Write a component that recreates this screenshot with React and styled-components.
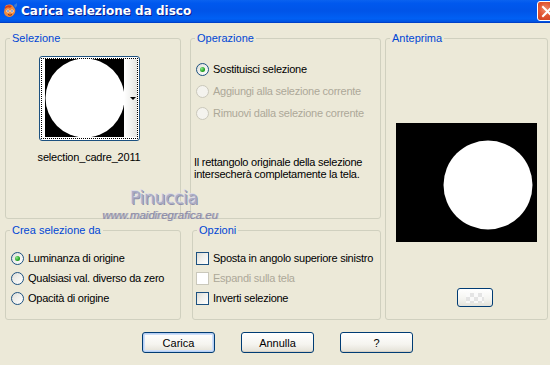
import React from 'react'
import styled, { createGlobalStyle } from 'styled-components'

const GlobalStyle = createGlobalStyle`
  html, body {
    margin: 0;
    padding: 0;
    background: #ece9d8;
  }
`

const App = () => {
  return (
    <Window>
      <GlobalStyle />
      <TitleBar>
        <AppIcon />
        <TitleText>Carica selezione da disco</TitleText>
        <CloseButton>
          <svg width="13" height="13" viewBox="0 0 13 13">
            <path d="M2 2 L11 11 M11 2 L2 11" stroke="#fff" strokeWidth="2" strokeLinecap="square" />
          </svg>
        </CloseButton>
      </TitleBar>

      <Body>
        <Groups>
          <Group>
            <Legend>Selezione</Legend>
            <SelectionContent>
              <Thumb>
                <Focus>
                  <svg width="79" height="78" viewBox="0 0 79 78">
                    <rect width="79" height="78" fill="#000" />
                    <circle cx="40" cy="39" r="39.5" fill="#fff" />
                  </svg>
                  <Strip>
                    <Arrow />
                  </Strip>
                </Focus>
              </Thumb>
              <ThumbName>selection_cadre_2011</ThumbName>
            </SelectionContent>
          </Group>

          <Group $shift={5}>
            <Legend>Operazione</Legend>
            <OptionList $top={13} $row={22}>
              <Option>
                <Radio $checked />
                <OptionLabel>Sostituisci selezione</OptionLabel>
              </Option>
              <Option>
                <Radio $disabled />
                <OptionLabel $disabled>Aggiungi alla selezione corrente</OptionLabel>
              </Option>
              <Option>
                <Radio $disabled />
                <OptionLabel $disabled>Rimuovi dalla selezione corrente</OptionLabel>
              </Option>
            </OptionList>
            <Note>
              Il rettangolo originale della selezione
              <br />
              intersecherà completamente la tela.
            </Note>
          </Group>

          <PreviewGroup>
            <Legend>Anteprima</Legend>
            <Preview>
              <svg width="141" height="119" viewBox="0 0 141 119">
                <rect width="141" height="119" fill="#000" />
                <circle cx="92" cy="62" r="44.5" fill="#fff" />
              </svg>
            </Preview>
            <SmallButton>
              <Checker />
            </SmallButton>
          </PreviewGroup>

          <Group>
            <Legend>Crea selezione da</Legend>
            <OptionList $top={11} $row={20} $left={5}>
              <Option>
                <Radio $checked />
                <OptionLabel>Luminanza di origine</OptionLabel>
              </Option>
              <Option>
                <Radio />
                <OptionLabel>Qualsiasi val. diverso da zero</OptionLabel>
              </Option>
              <Option>
                <Radio />
                <OptionLabel>Opacità di origine</OptionLabel>
              </Option>
            </OptionList>
          </Group>

          <Group $shift={7}>
            <Legend>Opzioni</Legend>
            <OptionList $top={11} $row={20} $left={3}>
              <Option>
                <Check />
                <OptionLabel>Sposta in angolo superiore sinistro</OptionLabel>
              </Option>
              <Option>
                <Check $disabled />
                <OptionLabel $disabled>Espandi sulla tela</OptionLabel>
              </Option>
              <Option>
                <Check />
                <OptionLabel>Inverti selezione</OptionLabel>
              </Option>
            </OptionList>
          </Group>
        </Groups>

        <ButtonRow>
          <PushButton $default>Carica</PushButton>
          <PushButton>Annulla</PushButton>
          <PushButton>?</PushButton>
        </ButtonRow>
      </Body>

      <Watermark>
        <WatermarkName>Pinuccia</WatermarkName>
        <WatermarkUrl>www.maidiregrafica.eu</WatermarkUrl>
      </Watermark>
    </Window>
  )
}

const AppIcon = () => (
  <IconBox>
    <svg width="16" height="16" viewBox="0 0 16 16">
      <path d="M3 4 C4 1 9 1 11 3 L13 6 C14 9 12 13 8 14 C5 14 2 12 2 9 Z" fill="#f08a3c" />
      <path d="M3 4 C5 2 8 2 10 3 L8 5 C6 4 4 5 3 6 Z" fill="#d23a1e" />
      <circle cx="6" cy="8" r="1.6" fill="#fff" />
      <circle cx="10" cy="8" r="1.6" fill="#fff" />
      <circle cx="6" cy="8" r="0.8" fill="#1a3a8a" />
      <circle cx="10" cy="8" r="0.8" fill="#1a3a8a" />
      <path d="M12 2 L15 0 L15 3 L13 5 Z" fill="#3a7bd5" />
      <path d="M6 11.5 Q8 13 10 11.5" stroke="#8a2a10" strokeWidth="1" fill="none" />
    </svg>
  </IconBox>
)

export default App

/* window + title */
const Window = styled.div`
  position: relative;
  width: 550px;
  height: 365px;
  overflow: hidden;
  background: #ece9d8;
  font-family: 'Liberation Sans', Arial, sans-serif;
  font-size: 11px;
  color: #000;
`
const TitleBar = styled.div`
  display: flex;
  align-items: center;
  height: 23px;
  box-sizing: border-box;
  border-bottom: 1px solid #0040c8;
  background: linear-gradient(
    to bottom,
    #0a62f0 0%,
    #0058ee 15%,
    #0054e8 50%,
    #0060f4 85%,
    #0051df 100%
  );
`
const IconBox = styled.span`
  display: flex;
  width: 16px;
  height: 16px;
  margin: 0 3px 0 2px;
`
const TitleText = styled.span`
  flex: 1;
  font-family: 'DejaVu Sans', 'Liberation Sans', sans-serif;
  font-weight: bold;
  font-size: 12px;
  color: #fff;
  text-shadow: 1px 1px 0 #0a1e8c;
`
const CloseButton = styled.span`
  display: flex;
  align-items: center;
  justify-content: center;
  align-self: flex-start;
  flex-shrink: 0;
  width: 21px;
  height: 20px;
  margin: 1px -8px 0 0;
  box-sizing: border-box;
  border: 1px solid #fff;
  border-radius: 3px;
  background: radial-gradient(circle at 40% 40%, #f08a6a 0%, #e0532f 45%, #c3391a 100%);
`

/* body layout */
const Body = styled.div`
  padding: 9px 2px 0 5px;
`
const Groups = styled.div`
  display: grid;
  grid-template-columns: 176px 196px 163px;
  grid-template-rows: 187px 96px;
  column-gap: 4px;
  row-gap: 5px;
`
const Group = styled.fieldset`
  margin: 0 0 0 ${(p) => p.$shift || 0}px;
  padding: 0;
  min-width: 0;
  border: 1px solid #d0d0bf;
  border-radius: 3px;
`
const PreviewGroup = styled(Group)`
  grid-column: 3;
  grid-row: 1 / span 2;
  display: flex;
  flex-direction: column;
  align-items: center;
`
const Legend = styled.legend`
  margin-left: 4px;
  padding: 0 2px;
  line-height: 13px;
  color: #0046d5;
`

/* selezione */
const SelectionContent = styled.div`
  display: flex;
  flex-direction: column;
  align-items: center;
  width: 102px;
  padding: 11px 0 0 32px;
`
const Thumb = styled.div`
  width: 101px;
  height: 85px;
  box-sizing: border-box;
  padding: 1px;
  border: 1px solid #1c5180;
  border-radius: 3px;
  background: #fff;
`
const Focus = styled.div`
  display: flex;
  height: 100%;
  box-sizing: border-box;
  padding: 0 0 0 3px;
  border: 1px dotted #000;
  align-items: flex-start;
`
const Strip = styled.div`
  flex: 1;
  height: 78px;
  display: flex;
  align-items: center;
  justify-content: flex-end;
  padding-right: 1px;
  background: linear-gradient(to right, #ffffff 0%, #f2f2f0 50%, #e4e4e0 100%);
`
const Arrow = styled.span`
  width: 0;
  height: 0;
  border-left: 3px solid transparent;
  border-right: 3px solid transparent;
  border-top: 3px solid #000;
`
const ThumbName = styled.div`
  margin-top: 10px;
  line-height: 13px;
  letter-spacing: -0.2px;
  white-space: nowrap;
`

/* radio / check lists */
const OptionList = styled.div`
  display: flex;
  flex-direction: column;
  padding: ${(p) => p.$top}px 0 0 ${(p) => p.$left || 5}px;
  & > * {
    height: ${(p) => p.$row}px;
  }
`
const Option = styled.div`
  display: flex;
  align-items: center;
  gap: 4px;
  white-space: nowrap;
`
const OptionLabel = styled.span`
  letter-spacing: -0.25px;
  color: ${(p) => (p.$disabled ? '#aca899' : '#000')};
`
const Radio = styled.span`
  position: relative;
  flex-shrink: 0;
  width: 13px;
  height: 13px;
  box-sizing: border-box;
  border-radius: 50%;
  border: 1px solid ${(p) => (p.$disabled ? '#cac8bb' : '#1c5180')};
  background: ${(p) =>
    p.$disabled
      ? '#f4f3ee'
      : 'linear-gradient(135deg, #dcdcd6 0%, #eeeeea 40%, #ffffff 100%)'};
  &::after {
    content: '';
    display: ${(p) => (p.$checked ? 'block' : 'none')};
    position: absolute;
    left: 3px;
    top: 3px;
    width: 5px;
    height: 5px;
    border-radius: 50%;
    background: radial-gradient(circle at 35% 35%, #8ee88e 0%, #21a121 60%, #1a8a1a 100%);
  }
`
const Check = styled.span`
  flex-shrink: 0;
  width: 13px;
  height: 13px;
  box-sizing: border-box;
  border: 1px solid ${(p) => (p.$disabled ? '#cac8bb' : '#1c5180')};
  background: ${(p) =>
    p.$disabled
      ? '#ffffff'
      : 'linear-gradient(135deg, #dcdcd6 0%, #eeeeea 40%, #ffffff 100%)'};
`
const Note = styled.p`
  margin: 32px 0 0 3px;
  line-height: 12px;
  letter-spacing: -0.25px;
`

/* anteprima */
const Preview = styled.div`
  display: flex;
  margin-top: 78px;
`
const SmallButton = styled.div`
  display: flex;
  align-items: center;
  justify-content: center;
  width: 36px;
  height: 19px;
  margin: 46px 0 0 17px;
  box-sizing: border-box;
  border: 1px solid #003c74;
  border-radius: 3px;
  background: linear-gradient(to bottom, #ffffff 0%, #f4f4f0 60%, #e3e2da 100%);
`
const Checker = styled.span`
  width: 18px;
  height: 10px;
  background-image: conic-gradient(#e2e2e2 25%, #fafafa 0 50%, #e2e2e2 0 75%, #fafafa 0);
  background-size: 8px 8px;
  opacity: 0.9;
`

/* bottom buttons */
const ButtonRow = styled.div`
  display: flex;
  gap: 26px;
  margin-top: 12px;
  padding-left: 137px;
`
const PushButton = styled.div`
  display: flex;
  align-items: center;
  justify-content: center;
  width: 73px;
  height: 21px;
  box-sizing: border-box;
  border: 1px solid #003c74;
  border-radius: 3px;
  background: linear-gradient(to bottom, #ffffff 0%, #f5f4ef 60%, #e3e1d6 100%);
  box-shadow: ${(p) =>
    p.$default ? 'inset 0 0 0 1px #b6cff4, inset 0 0 0 2px #cfdff8' : 'inset 0 -1px 0 #d6d0c5'};
`

/* watermark overlay */
const Watermark = styled.div`
  position: absolute;
  left: 102px;
  top: 187px;
  width: 116px;
  display: flex;
  flex-direction: column;
  align-items: center;
  pointer-events: none;
`
const WatermarkName = styled.span`
  padding-left: 8px;
  font-family: 'DejaVu Sans', sans-serif;
  font-size: 17px;
  line-height: 22px;
  letter-spacing: -0.3px;
  color: #a9abc6;
  text-shadow: -1px -1px 0 #dcdce6, 1px 1px 0 #9090aa;
`
const WatermarkUrl = styled.span`
  font-family: 'Liberation Sans', sans-serif;
  font-style: italic;
  font-size: 11.5px;
  line-height: 12px;
  color: #8c8ca4;
  text-shadow: 1px 0 0 #b4b4c8;
`
